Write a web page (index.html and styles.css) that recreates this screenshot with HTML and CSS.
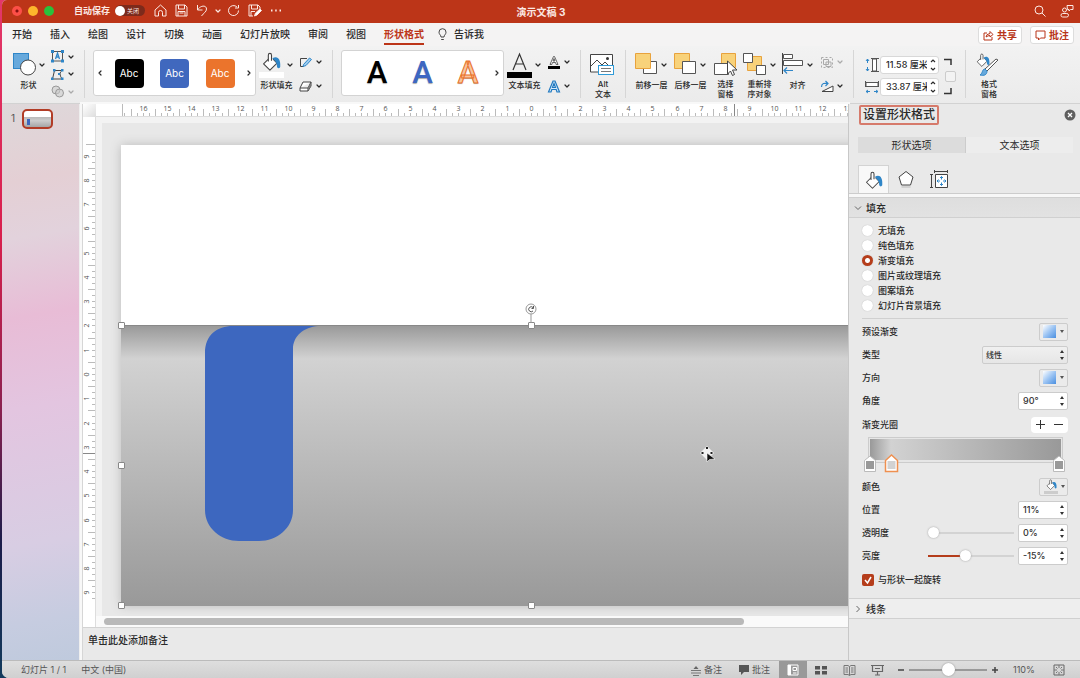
FILE: index.html
```html
<!DOCTYPE html>
<html lang="zh-CN">
<head>
<meta charset="utf-8">
<title>演示文稿 3</title>
<link rel="stylesheet" href="styles.css">
</head>
<body>
<svg class="defs" aria-hidden="true">
  <defs>
    <symbol id="chev" viewBox="0 0 6 6"><path d="M1 2l2 2 2-2" fill="none" stroke="currentColor" stroke-width="1.2" stroke-linecap="round" stroke-linejoin="round"/></symbol>
    <symbol id="updown" viewBox="0 0 6 14"><path d="M1 5l2-3 2 3zM1 9l2 3 2-3z" fill="currentColor"/></symbol>
    <symbol id="steps" viewBox="0 0 8 16"><path d="M2 5l2-2 2 2M2 11l2 2 2-2" fill="none" stroke="currentColor" stroke-width="1.2"/></symbol>
    <symbol id="bucket" viewBox="0 0 24 24">
      <path d="M10 7L2 15l8 8 9-9-5-5" fill="#fff" stroke="#444" stroke-width="1.4" stroke-linejoin="round"/>
      <path d="M8 12V4c0-3 4-3 4 0v7" fill="#fff" stroke="#444" stroke-width="1.4"/>
      <path d="M13 8c6-4 11 0 10 11-1 2-3 2-4 0 0-4-1-7-6-11z" fill="#2f86c8"/>
    </symbol>
    <linearGradient id="barGrad"><stop offset="0" stop-color="#999"/><stop offset=".11" stop-color="#d2d2d2"/><stop offset="1" stop-color="#999"/></linearGradient>
  </defs>
</svg>

<div class="window">
  <header class="titlebar">
    <div class="lights"><button class="light red" aria-label="关闭窗口"></button><button class="light yellow" aria-label="最小化"></button><button class="light green" aria-label="缩放"></button></div>
    <span class="autosave" id="autosave">自动保存</span>
    <button class="toggle" role="switch" aria-checked="false" aria-labelledby="autosave"><i></i><span>关闭</span></button>
    <nav class="quick">
      <button aria-label="主页"><svg width="13" height="13" viewBox="0 0 13 13"><path d="M1 6l5.500-5L12 6v6H8.500V8.500q0-2-2-2t-2 2V12H1z"/></svg></button>
      <button aria-label="保存"><svg width="13" height="13" viewBox="0 0 13 13"><path d="M1 1h9l2 2v9H1zM3.500 1v4h6V1M3 12V7.500h7V12M4.500 9h4"/></svg></button>
      <button aria-label="撤消"><svg width="13" height="13" viewBox="0 0 13 13"><path d="M1.500 1v5h5M1.500 6c3-5 9-5 9-1 0 3-3 4-5 7"/></svg></button>
      <button class="tiny" aria-label="撤消选项"><svg width="6" height="6"><use href="#chev"/></svg></button>
      <button aria-label="重做"><svg width="13" height="13" viewBox="0 0 13 13"><path d="M10 3A5 5 0 1 0 11.500 6.500M11.500 1v3H8"/></svg></button>
      <button aria-label="另存为"><svg width="14" height="13" viewBox="0 0 14 13"><path d="M5 12H1V1h9l2 2v2M3.500 1v4h6V1M3 12V7.500h4"/><path d="M6.500 12l1-3 4.500-4 1.500 1.500L9 11z" fill="#fff"/></svg></button>
      <button aria-label="更多"><svg width="12" height="13" viewBox="0 0 12 13"><path d="M1 6.500h1.500M5.200 6.500h1.500M9.500 6.500H11" stroke-width="1.800"/></svg></button>
    </nav>
    <h1 class="doc">演示文稿 3</h1>
    <div class="title-right">
      <button aria-label="搜索"><svg width="12" height="12" viewBox="0 0 12 12"><circle cx="5" cy="5" r="4"/><path d="M8 8l3.500 3.500"/></svg></button>
      <button aria-label="协作"><svg width="14" height="14" viewBox="0 0 14 14"><circle cx="4.500" cy="6" r="2"/><rect x="1" y="9.500" width="7.500" height="3.500" rx="1.700"/><path d="M7 1.500h6v4h-2.500L9 7V5.500H7.500z"/></svg></button>
    </div>
  </header>

  <div class="tabs">
    <nav class="tablist">
      <button>开始</button><button>插入</button><button>绘图</button><button>设计</button><button>切换</button><button>动画</button><button>幻灯片放映</button><button>审阅</button><button>视图</button><button class="on">形状格式</button>
      <button class="tell"><svg width="9" height="13" viewBox="0 0 9 13"><path d="M3 9C3 7 1 6.500 1 4.200a3.500 3.500 0 0 1 7 0C8 6.500 6 7 6 9zM3.200 11.500h2.600" fill="none" stroke="#444"/></svg>告诉我</button>
    </nav>
    <div class="share">
      <button><svg width="11" height="11" viewBox="0 0 11 11"><path d="M4 3H1v7h8V7M3 7q0-3 4-3.500V1.500L10 4.500 7 7V5.500Q5 5.500 3 7z"/></svg>共享</button>
      <button><svg width="11" height="11" viewBox="0 0 11 11"><path d="M1 1h9v7H5.500l-2 2V8H1z"/></svg>批注</button>
    </div>
  </div>

  <div class="ribbon">
    <button class="big shapes"><span class="pic"><svg width="24" height="24" viewBox="0 0 24 24"><rect x=".5" y="1.500" width="15" height="15" fill="#67a9dc" stroke="#2f86c8"/><circle cx="15" cy="15.500" r="7.500" fill="#fff" stroke="#444"/></svg><svg class="c" width="6" height="6"><use href="#chev"/></svg></span>形状</button>
    <div class="small three">
      <button aria-label="文本框"><svg width="14" height="13" viewBox="0 0 14 13"><rect x="1.500" y="1.500" width="10" height="9.500" fill="none" stroke="#555"/><path d="M0 0h3v3H0zM10 0h3v3h-3zM0 9.500h3v3H0zM10 9.500h3v3h-3z" fill="#2f86c8"/><path d="M4.500 9l2-6 2 6M5.200 7h2.600" fill="none" stroke="#2f86c8" stroke-width="1.300"/></svg><svg class="c" width="6" height="6"><use href="#chev"/></svg></button>
      <button aria-label="编辑形状"><svg width="14" height="13" viewBox="0 0 14 13"><path d="M3.500 2.500h7.500Q7 5 11 11H1.500z" fill="none" stroke="#444"/><path d="M2 1h2.500v2.500H2zM10 1h2.500v2.500H10zM0 9.500h2.500V12H0zM10 9.500h2.500V12H10zM7 5h2v2H7z" fill="#2f86c8"/></svg><svg class="c" width="6" height="6"><use href="#chev"/></svg></button>
      <button class="off" aria-label="合并形状"><svg width="14" height="13" viewBox="0 0 14 13"><g fill="#ccc" fill-opacity=".6" stroke="#999"><circle cx="5" cy="5" r="4"/><circle cx="8.500" cy="8" r="4"/></g></svg><svg class="c" width="6" height="6"><use href="#chev"/></svg></button>
    </div>
    <i class="sep"></i>
    <div class="gallery">
      <button class="arrow prev" aria-label="上一个"><svg width="6" height="6"><use href="#chev"/></svg></button>
      <button class="chip black">Abc</button><button class="chip blue">Abc</button><button class="chip orange">Abc</button>
      <button class="arrow next" aria-label="下一个"><svg width="6" height="6"><use href="#chev"/></svg></button>
    </div>
    <button class="big fill"><span class="pic"><svg width="25" height="26" viewBox="0 0 25 26"><use href="#bucket" x="2" width="21" height="19"/><path d="M0 20h25v6H0z" fill="#fff"/></svg><svg class="c" width="6" height="6"><use href="#chev"/></svg></span>形状填充</button>
    <div class="small">
      <button aria-label="形状轮廓"><svg width="14" height="13" viewBox="0 0 14 13"><path d="M8 2.500H1.500v8H5" fill="none" stroke="#444"/><path d="M4.500 8.500l6-6.500 2 1.500L7 9.500l-3 1z" fill="#9ccbee" stroke="#2f86c8"/></svg><svg class="c" width="6" height="6"><use href="#chev"/></svg></button>
      <button aria-label="形状效果"><svg width="14" height="13" viewBox="0 0 14 13"><path d="M4 2h8L9 8H1zM1 8v3h8l3-5V2M9 8v3" fill="#fff" stroke="#444" stroke-linejoin="round"/><path d="M9 8l3-5v3l-3 5z" fill="#777"/></svg><svg class="c" width="6" height="6"><use href="#chev"/></svg></button>
    </div>
    <i class="sep"></i>
    <div class="gallery">
      <span class="arrow"></span>
      <button class="art a1">A</button><button class="art a2">A</button><button class="art a3">A</button>
      <button class="arrow next" aria-label="下一个"><svg width="6" height="6"><use href="#chev"/></svg></button>
    </div>
    <button class="big fill"><span class="pic"><svg width="25" height="26" viewBox="0 0 25 26"><path d="M6 18l6.500-16L19 18M8.500 12h8" fill="none" stroke="#333" stroke-width="1.200"/><path d="M0 20h25v6H0z"/></svg><svg class="c" width="6" height="6"><use href="#chev"/></svg></span>文本填充</button>
    <div class="small">
      <button aria-label="文本轮廓"><svg width="14" height="13" viewBox="0 0 14 13"><path d="M3 8.500L6.500.5h1L11 8.500H9.200L8.500 6.500h-3l-.7 2zM6 5h2L7 2.500z" fill="#fff" stroke="#444" stroke-width=".8"/><path d="M1 10h12v3H1z"/></svg><svg class="c" width="6" height="6"><use href="#chev"/></svg></button>
      <button aria-label="文本效果"><svg width="14" height="13" viewBox="0 0 14 13"><path d="M1.500 12L6 1h2l4.500 11H10L9.200 9.500H4.800L4 12zM5.500 7.500h3L7 3.500z" fill="#d6eafa" stroke="#2079c0" stroke-width="1.200"/></svg><svg class="c" width="6" height="6"><use href="#chev"/></svg></button>
    </div>
    <i class="sep"></i>
    <button class="big alt"><span class="pic"><svg width="26" height="24" viewBox="0 0 26 24"><path d="M9 20H1.500V2.500h22V13" fill="#fff" stroke="#444"/><path d="M2 14l6-6 5 5 3-3 4 4" fill="none" stroke="#444"/><circle cx="18.500" cy="6.500" r="1.500" fill="#333"/><rect x="9.500" y="13.500" width="15" height="9" fill="#fff" stroke="#2f9bd8"/><path d="M12 16.500h10M12 19.500h10" stroke="#777"/></svg></span>Alt<br>文本</button>
    <i class="sep"></i>
    <div class="arrange">
      <button class="big"><span class="pic"><svg width="24" height="24" viewBox="0 0 24 24"><path d="M9.500 9.500h13v12h-13z" fill="#fff" stroke="#555"/><path d="M1.500 1.500h15v15h-15z" fill="#f8d27a" stroke="#e8a23c"/></svg><svg class="c" width="6" height="6"><use href="#chev"/></svg></span>前移一层</button>
      <button class="big"><span class="pic"><svg width="24" height="24" viewBox="0 0 24 24"><path d="M1.500 1.500h15v15h-15z" fill="#f8d27a" stroke="#e8a23c"/><path d="M9.500 9.500h13v12h-13z" fill="#fff" stroke="#555"/></svg><svg class="c" width="6" height="6"><use href="#chev"/></svg></span>后移一层</button>
      <button class="big pick"><span class="pic"><svg width="26" height="26" viewBox="0 0 26 26"><path d="M9.500 1.500h14v14h-14z" fill="#f8d27a" stroke="#e8a23c"/><path d="M2.500 11.500h14v11h-14z" fill="#fff" stroke="#555"/><path d="M15.500 9v13l3-3 2 4.500 2-1-2-4.500H25z" fill="#fff" stroke="#444"/></svg></span>选择<br>窗格</button>
      <button class="big order"><span class="pic"><svg width="24" height="24" viewBox="0 0 24 24"><path d="M4.500 4.500h14v14h-14z" fill="#f8d27a" stroke="#e8a23c"/><path d="M.5 1.500h9v9h-9zM13.500 13.500h9v9h-9z" fill="#fff" stroke="#555"/></svg><svg class="c" width="6" height="6"><use href="#chev"/></svg></span>重新排<br>序对象</button>
      <button class="big"><span class="pic"><svg width="24" height="24" viewBox="0 0 24 24"><path d="M2.500 1v21" stroke="#444"/><path d="M3.500 2.500h9v4h-9zM3.500 8.500h19v5h-19z" fill="#fff" stroke="#555"/><path d="M13 18.500H4M7 15.500l-3 3 3 3" fill="none" stroke="#2f86c8" stroke-width="1.200"/></svg><svg class="c" width="6" height="6"><use href="#chev"/></svg></span>对齐</button>
    </div>
    <div class="small">
      <button class="off" aria-label="组合"><svg width="14" height="13" viewBox="0 0 14 13"><g fill="none" stroke="#aaa"><path d="M3.500 3.500h5v5h-5zM6 6h5v4.500H6z"/><rect x="1.500" y="1.500" width="11" height="10" stroke-dasharray="2 2"/></g></svg><svg class="c" width="6" height="6"><use href="#chev"/></svg></button>
      <button aria-label="旋转"><svg width="14" height="13" viewBox="0 0 14 13"><path d="M2 11.500h11V6z" fill="#fff" stroke="#444"/><path d="M1.500 7c0-4 3-4 6-3.500M5.500 1L8 3.500 5.500 6" fill="none" stroke="#2f86c8" stroke-width="1.200"/></svg><svg class="c" width="6" height="6"><use href="#chev"/></svg></button>
    </div>
    <i class="sep"></i>
    <div class="sizes">
      <label class="size"><svg width="14" height="14" viewBox="0 0 14 14"><path d="M2.500 1v4M1 3l1.500-2L4 3M2.500 13V9M1 11l1.500 2L4 11" fill="none" stroke="#2f86c8"/><path d="M6 .5h8M6 13.500h8M7.500 1v12h4V1z" fill="#fff" stroke="#555"/></svg><span class="box"><input value="11.58 厘米" aria-label="高度"><svg width="8" height="16"><use href="#steps"/></svg></span></label>
      <label class="size"><svg width="14" height="14" viewBox="0 0 14 14"><path d="M.5 1v6M13.500 1v6M1 2.500h12v4H1z" fill="#fff" stroke="#555"/><path d="M1 11.500h4M3 10l-2 1.500L3 13M13 11.500H9M11 10l2 1.500L11 13" fill="none" stroke="#2f86c8"/></svg><span class="box"><input value="33.87 厘米" aria-label="宽度"><svg width="8" height="16"><use href="#steps"/></svg></span></label>
    </div>
    <div class="lock">
      <svg width="8" height="7" viewBox="0 0 8 7"><path d="M0 1.500h7V7" fill="none" stroke="#333" stroke-width="1.500"/></svg>
      <input type="checkbox" aria-label="锁定纵横比">
      <svg width="8" height="7" viewBox="0 0 8 7"><path d="M0 5.500h7V0" fill="none" stroke="#333" stroke-width="1.500"/></svg>
    </div>
    <i class="sep"></i>
    <button class="big format"><span class="pic"><svg width="26" height="26" viewBox="0 0 26 26"><use href="#bucket" x="1" y="1" width="16" height="14"/><path d="M24 8L13 19l-2-2L22 7z" fill="#fff" stroke="#555"/><path d="M11 17c-3 0-2 4-5 6 4 1 7 0 7-4z" fill="#67a9dc" stroke="#2f86c8"/></svg></span>格式<br>窗格</button>
  </div>

  <main class="work">
    <aside class="thumbs">
      <span>1</span>
      <button class="thumb" aria-label="幻灯片 1"><i></i></button>
    </aside>
    <section class="editor">
      <i class="corner"></i>
      <svg class="hruler" id="hruler"></svg>
      <svg class="vruler" id="vruler"></svg>
      <div class="canvas">
        <div class="slide">
          <svg class="art-layer" width="820" height="461" viewBox="0 0 820 461">
            <defs><linearGradient id="shapeGrad" x2="0" y2="1"><stop offset="0" stop-color="#989898"/><stop offset=".12" stop-color="#d2d2d2"/><stop offset="1" stop-color="#999"/></linearGradient></defs>
            <rect y="180" width="820" height="281" fill="url(#shapeGrad)"/>
            <path d="M0 180.500h820" stroke="#888"/>
            <path d="M84 208c0-18 12-27 28-27h85c-14 1-25 10-25 23v161c0 18-16 31-34 31h-20c-18 0-34-13-34-31z" fill="#3d67bf"/>
          </svg>
          <i class="handle tl"></i><i class="handle tc"></i><i class="handle ml"></i><i class="handle bl"></i><i class="handle bc"></i>
          <svg class="rotate" width="12" height="20" viewBox="0 0 12 20"><path d="M6 11v9" stroke="#999"/><circle cx="6" cy="6" r="5" fill="#fff" stroke="#999"/><path d="M8 4.500A2.500 2.500 0 1 0 8 8M8.500 3v2.500H6.500" fill="none" stroke="#555"/></svg>
          <svg class="pointer" width="16" height="18" viewBox="0 0 16 18"><path d="M7 0l7 7-7 7-7-7z" fill="#fff" fill-opacity=".8"/><path d="M6 2h2M1.500 7h2M10.500 7h2" stroke="#222" stroke-width="2"/><path d="M7 7v9l2.500-2.500L15 13z" fill="#111" stroke="#fff" stroke-width=".6"/></svg>
        </div>
      </div>
      <div class="scroll"><i></i></div>
      <div class="notes">单击此处添加备注</div>
    </section>

    <aside class="pane">
      <div class="pane-head"><h2>设置形状格式</h2><button aria-label="关闭窗格"><svg width="12" height="12" viewBox="0 0 12 12"><circle cx="6" cy="6" r="5.500" fill="#5f5f5f"/><path d="M4 4l4 4M8 4L4 8" stroke="#fff" stroke-width="1.300"/></svg></button></div>
      <div class="segments"><button class="on">形状选项</button><button>文本选项</button></div>
      <div class="icon-tabs">
        <button class="on" aria-label="填充与线条"><svg width="20" height="18"><use href="#bucket" width="20" height="18"/></svg></button>
        <button aria-label="效果"><svg width="18" height="18" viewBox="0 0 18 18"><path d="M9 1.500l7 5.500-2.500 8h-9L2 7z" fill="#fff" stroke="#444"/><path d="M4.500 17h9" stroke="#bbb"/></svg></button>
        <button aria-label="大小与属性"><svg width="20" height="20" viewBox="0 0 20 20"><path d="M6.500 5.500h12v13h-12z" fill="#fff" stroke="#444"/><path d="M5 2.500h14M5.500 1v3M18.500 1v3M2.500 5v14M1 5.500h3M1 18.500h3" stroke="#444"/><path d="M12.500 7.500v3M11 9l1.500-1.500L14 9M12.500 16.500v-3M11 15l1.500 1.500L14 15M8 12h3M9.500 10.500L8 12l1.500 1.500M17 12h-3M15.500 10.500L17 12l-1.500 1.500" fill="none" stroke="#2f86c8"/></svg></button>
      </div>
      <button class="section"><svg width="8" height="8" viewBox="0 0 8 8"><path d="M1 2.500l3 3 3-3" fill="none" stroke="#666"/></svg>填充</button>
      <div class="body">
        <fieldset class="radios">
          <label><input type="radio" name="fill">无填充</label>
          <label><input type="radio" name="fill">纯色填充</label>
          <label><input type="radio" name="fill" checked>渐变填充</label>
          <label><input type="radio" name="fill">图片或纹理填充</label>
          <label><input type="radio" name="fill">图案填充</label>
          <label><input type="radio" name="fill">幻灯片背景填充</label>
        </fieldset>
        <div class="row"><span>预设渐变</span><button class="swatch" aria-label="预设渐变"><i></i><b></b></button></div>
        <div class="row"><label for="type">类型</label><span class="picker"><select id="type"><option>线性</option></select><svg width="6" height="14"><use href="#updown"/></svg></span></div>
        <div class="row"><span>方向</span><button class="swatch" aria-label="方向"><i></i><b></b></button></div>
        <div class="row"><label for="angle">角度</label><span class="spin"><input id="angle" value="90°"><svg width="6" height="14"><use href="#updown"/></svg></span></div>
        <div class="row stops-row"><span>渐变光圈</span><span class="plusminus"><button aria-label="添加光圈"><svg width="9" height="9" viewBox="0 0 9 9"><path d="M0 4.500h9M4.500 0v9" stroke="#333"/></svg></button><button aria-label="删除光圈"><svg width="9" height="9" viewBox="0 0 9 9"><path d="M0 4.500h9" stroke="#333"/></svg></button></span></div>
        <svg class="stops" height="38" viewBox="0 0 205 38">
          <rect x="5.500" y=".5" width="194" height="25" fill="#e6e6e6" stroke="#ccc"/><rect x="7" y="2" width="191" height="21" fill="url(#barGrad)"/>
          <g fill="#fff" stroke="#bbb"><path d="M1.500 34.500v-11L7 19l5.500 4.500v11zM190.500 34.500v-11L196 19l5.500 4.500v11z"/><path d="M22.500 34.500v-11l6-5.500 6 5.500v11z" stroke="#ee9050" stroke-width="1.500"/></g>
          <path d="M3 24h8v8H3zM192 24h8v8h-8z" fill="#999"/><path d="M24.500 24h8v8h-8z" fill="#d2d2d2"/>
        </svg>
        <div class="row"><span>颜色</span><button class="swatch color" aria-label="颜色"><svg width="16" height="16" viewBox="0 0 16 16"><use href="#bucket" x="2" width="13" height="11"/><path d="M1 12h14v3H1z" fill="#ccc"/></svg><b></b></button></div>
        <div class="row"><label for="pos">位置</label><span class="spin"><input id="pos" value="11%"><svg width="6" height="14"><use href="#updown"/></svg></span></div>
        <div class="row"><label for="alpha">透明度</label><input class="range" type="range" min="0" max="100" value="0" aria-label="透明度滑块"><span class="spin"><input id="alpha" value="0%"><svg width="6" height="14"><use href="#updown"/></svg></span></div>
        <div class="row"><label for="bright">亮度</label><input class="range lum" type="range" min="-100" max="100" value="-15" aria-label="亮度滑块"><span class="spin"><input id="bright" value="-15%"><svg width="6" height="14"><use href="#updown"/></svg></span></div>
        <label class="check"><input type="checkbox" checked><svg width="12" height="12" viewBox="0 0 12 12"><path d="M3 6l2.500 3L9 3" fill="none" stroke="#fff" stroke-width="1.500"/></svg>与形状一起旋转</label>
      </div>
      <button class="section closed"><svg width="8" height="8" viewBox="0 0 8 8"><path d="M2.500 1l3 3-3 3" fill="none" stroke="#666"/></svg>线条</button>
    </aside>
  </main>

  <footer class="status">
    <span class="count">幻灯片 1 / 1</span><button class="lang">中文 (中国)</button>
    <div class="status-right">
      <button class="memo"><svg width="12" height="12" viewBox="0 0 12 12"><path d="M1 6.500h10M1 9h10M3 11.500h6" stroke="#777"/><path d="M3.500 5L6 2l2.500 3z" fill="#666"/></svg>备注</button>
      <button class="memo"><svg width="12" height="12" viewBox="0 0 12 12"><path d="M1 1h10v7H6l-3 3V8H1z" fill="#555"/></svg>批注</button>
      <div class="views">
        <button class="on" aria-label="普通"><svg width="12" height="12" viewBox="0 0 12 12"><path d="M1 1h10v10H1zM6 3.500h3.500v3H6zM6 9h3.500" fill="none" stroke="#fff"/><path d="M1 1h3v10H1z" fill="#fff"/></svg></button>
        <button aria-label="幻灯片浏览"><svg width="12" height="12" viewBox="0 0 12 12"><path d="M0 2h5v3.500H0zM7 2h5v3.500H7zM0 7h5v3.500H0zM7 7h5v3.500H7z" fill="#555"/></svg></button>
        <button aria-label="阅读视图"><svg width="13" height="12" viewBox="0 0 13 12"><path d="M6.500 2.500L5 1.500H1v9h4l1.500 1 1.500-1h4v-9H8zM6.500 2.500v9M2.500 4H5M2.500 6H5M2.500 8H5M8 4h2.500M8 6h2.500M8 8h2.500" fill="none" stroke="#777"/></svg></button>
        <button aria-label="幻灯片放映"><svg width="13" height="12" viewBox="0 0 13 12"><path d="M0 1.500h13M1.500 2v5.500h10V2M4 4.500h5M6.500 7.500v3M4 11h5" fill="none" stroke="#666" stroke-width="1.200"/></svg></button>
      </div>
      <div class="zoom">
        <button aria-label="缩小"><svg width="8" height="8" viewBox="0 0 8 8"><path d="M1 4h6" stroke="#444" stroke-width="1.500"/></svg></button>
        <input type="range" min="0" max="100" value="50" aria-label="缩放">
        <button aria-label="放大"><svg width="8" height="8" viewBox="0 0 8 8"><path d="M1 4h6M4 1v6" stroke="#444" stroke-width="1.500"/></svg></button>
      </div>
      <span class="pct">110%</span>
      <button class="fit" aria-label="适应窗口"><svg width="12" height="12" viewBox="0 0 12 12"><path d="M1 1h10v10H1z" fill="none" stroke="#666"/><path d="M6 1v3M6 11V8M1 6h3M11 6H8M3 3l1.500 1.500M9 3L7.500 4.500M3 9l1.500-1.500M9 9L7.500 7.500" stroke="#777"/></svg></button>
    </div>
  </footer>
</div>
<script src="rulers.js"></script>
</body>
</html>
```
FILE: styles.css
```css
* { box-sizing: border-box; }
body {
  margin: 0;
  height: 100vh;
  overflow: hidden;
  background: linear-gradient(#e3386a, #d81f4d 35%, #8c2050 60%, #1b1c4a 80%, #123a5c);
  font: 9px/12px Inter, "Noto Sans CJK SC", sans-serif;
  color: #2a2a2a;
}
button, input, select { font: inherit; color: inherit; margin: 0; padding: 0; border: 0; background: none; }
button { display: flex; align-items: center; justify-content: center; white-space: nowrap; }
h1, h2, fieldset { margin: 0; padding: 0; border: 0; font-size: inherit; }
svg { display: block; flex: none; }
.defs { position: absolute; width: 0; height: 0; }
.window { display: flex; flex-direction: column; height: 100%; margin-left: 2px; overflow: hidden; border-radius: 5px 0 0 7px; background: #eee; }

/* title bar */
.titlebar { position: relative; display: grid; grid-template-columns: auto auto auto auto 1fr auto; align-items: center; height: 23px; padding-bottom: 2px; background: #bc3518; color: #fbe9e4; }
.lights { display: flex; gap: 6px; margin: 0 20px 0 10px; }
.light { width: 10px; height: 10px; border-radius: 50%; }
.red { background: radial-gradient(circle, #8a1010 1px, #fc4f47 2px); }
.yellow { background: #fdb52c; }
.green { background: #2ac13c; }
.autosave { font-weight: 700; }
.toggle { width: 30px; height: 11px; margin-left: 5px; border-radius: 6px; background: #7c2a1b; justify-content: flex-start; gap: 2px; font-size: 6px; }
.toggle i { width: 10px; height: 10px; border-radius: 50%; background: #fff; }
.quick { display: flex; align-items: center; gap: 8px; margin-left: 9px; }
.quick .tiny { margin: 0 -2px; }
.quick svg, .title-right svg { fill: none; stroke: #fbe9e4; color: #fbe9e4; }
.doc { position: absolute; left: 0; right: 0; text-align: center; font-size: 10px; line-height: 20px; pointer-events: none; }
.title-right { grid-column: 6; display: flex; gap: 14px; padding-right: 6px; }

/* tabs */
.tabs { display: flex; justify-content: space-between; height: 23px; padding: 0 6px 0 10px; background: #f4f3f3; }
.tablist { display: flex; gap: 18px; font-size: 10px; font-weight: 500; }
.tablist button { height: 22px; border-bottom: 2px solid transparent; padding-top: 2px; }
.tablist .on { color: #bc3518; border-color: #bc3518; font-weight: 700; }
.tell { gap: 7px; margin-left: -4px; }
.share { display: flex; gap: 8px; padding-top: 3px; }
.share button { width: 44px; height: 18px; gap: 3px; border: 1px solid #ddd; border-radius: 3px; background: #fff; color: #b83518; font-size: 10px; font-weight: 700; }
.share svg { fill: none; stroke: #b83518; }

/* ribbon */
.ribbon { display: flex; flex: none; height: 58px; padding: 4px 9px; background: linear-gradient(#f2f2f2, #ebebeb); border-bottom: 1px solid #d2d2d2; font-size: 8px; line-height: 10px; font-weight: 500; }
.big { display: flex; flex-direction: column; justify-content: flex-start; align-items: center; width: 35px; font-weight: 500; }
.pic { display: flex; align-items: flex-start; align-self: flex-start; height: 30px; gap: 3px; padding-top: 2px; }
.pic .c { margin-top: 10px; }
.shapes .pic { padding-left: 2px; gap: 2px; }
.order { width: 33px; }
.alt { width: 28px; }
.pick { width: 27px; }
.format { width: 30px; }
.small { display: flex; flex-direction: column; justify-content: space-around; width: 25px; height: 48px; margin-left: 5px; }
.small button { gap: 3px; justify-content: flex-start; }
.small.three { justify-content: space-between; }
.off { color: #aaa; }
.sep { width: 1px; height: 48px; margin: 0 8px; background: #d6d6d6; }
.gallery { display: flex; align-items: center; justify-content: space-between; width: 163px; height: 46px; margin-right: 3px; padding: 0 3px; border: 1px solid #d3d3d3; border-radius: 3px; background: #fff; }
.arrow { width: 6px; height: 20px; }
.prev svg { transform: rotate(90deg); }
.next svg { transform: rotate(-90deg); }
.chip { width: 29px; height: 29px; margin: 0 5px; border-radius: 4px; color: #fff; font-size: 10px; font-weight: 400; }
.black { background: #000; }
.blue { background: #4068be; }
.orange { background: #eb742c; }
.art { width: 39px; height: 32px; font: 500 31px/32px Roboto, sans-serif; color: #000; text-shadow: 0 1px 1px #aaa; }
.a2 { color: #3d67c2; }
.a3 { color: #f8c6a0; -webkit-text-stroke: 1px #eb742c; }
.arrange { display: flex; gap: 4px; }
.sizes { display: flex; flex-direction: column; gap: 4px; padding: 6px 0 0 3px; }
.size { display: flex; align-items: center; gap: 1px; }
.box { display: flex; align-items: center; width: 59px; height: 18px; padding: 0 2px 0 5px; border: 1px solid #d8d8d8; border-radius: 3px; background: #fff; font-size: 9px; }
.box input { width: 41px; margin-right: 2px; overflow: hidden; }
.box svg { margin-left: auto; }
.lock { display: flex; flex-direction: column; gap: 6px; padding-top: 8px; margin-left: 5px; width: 13px; }
.lock input { appearance: none; width: 11px; height: 11px; margin-left: 1px; border: 1px solid #ccc; border-radius: 2px; background: #f3f3f3; }

/* work area */
.work { display: flex; flex: 1; min-height: 0; }
.thumbs { display: flex; align-items: flex-start; gap: 7px; width: 77px; padding: 5px 0 0 9px; background: linear-gradient(170deg, #ded8da, #e4cfd4 14%, #e2d2dc 24%, #e8bcd6 38%, #e3c5e0 54%, #d8cde3 78%, #c6cce0 92%, #bfcadd); color: #555; font-size: 10px; line-height: 18px; }
.thumb { width: 31px; height: 20px; border: 2px solid #b23c26; border-radius: 5px; background: linear-gradient(#fff 40%, #bbb 40%, #ccc 60%, #a5a5a5); justify-content: flex-start; align-items: flex-end; padding: 0 0 2px 3px; }
.thumb i { width: 3px; height: 6px; background: #3d67bf; }
.editor { display: grid; grid-template: 13px 1fr 11px 33px / 13px 1fr; flex: 1; min-width: 0; margin-left: 3px; border-left: 1px solid #d6d6d6; outline: 2px solid #f8f8f8; }
.corner { background: linear-gradient(135deg, #fff, #ddd); }
.hruler { width: 100%; height: 13px; background: #fff; }
.vruler { grid-row: 2 / 4; width: 13px; height: 100%; background: #fff; }
.hruler text, .vruler text { font: 7px "Open Sans", sans-serif; fill: #555; text-anchor: middle; }
.canvas { min-width: 0; min-height: 0; overflow: hidden; border: solid #f3f3f3; border-width: 6px 0 0 6px; background: #e8e8e8; padding: 22px 0 0 19px; }
.slide { position: relative; width: 820px; height: 461px; background: #fff; box-shadow: 0 0 10px #bbb; }
.handle { position: absolute; width: 7px; height: 7px; border: 1px solid #888; border-radius: 1px; background: #fff; }
.tl { left: -3px; top: 177px; }
.tc { left: 407px; top: 177px; }
.ml { left: -3px; top: 317px; }
.bl { left: -3px; top: 457px; }
.bc { left: 407px; top: 457px; }
.rotate { position: absolute; left: 404px; top: 158px; }
.pointer { position: absolute; left: 579px; top: 301px; }
.scroll { padding: 2px 0 0 8px; background: #fafafa; }
.scroll i { display: block; width: 86%; height: 7px; border-radius: 4px; background: #b9b9b9; }
.notes { grid-column: 1 / 3; padding: 6px 5px; border-top: 1px solid #d3d3d3; background: #e9e9e9; font: 500 10px/14px "Liberation Serif", "Noto Sans CJK SC", serif; }

/* format pane */
.pane { display: flex; flex-direction: column; flex: none; width: 232px; border-left: 1px solid #c8c8c8; background: #e9e9e9; z-index: 1; }
.pane-head { display: flex; justify-content: space-between; align-items: center; height: 21px; padding: 0 4px 0 10px; }
.pane-head h2 { border: 2px solid #d67a6b; border-radius: 2px; padding: 0 2px; font-size: 12px; line-height: 16px; font-weight: 500; }
.segments { display: flex; margin: 12px 7px 0 9px; border-radius: 3px; font-size: 10px; }
.segments button { flex: 1; height: 16px; background: #ededed; }
.segments .on { background: #dcdcdc; border-right: 1px solid #ccc; }
.icon-tabs { display: flex; gap: 1px; margin-top: 12px; padding-left: 9px; border-bottom: 1px solid #ccc; }
.icon-tabs button { width: 31px; height: 28px; }
.icon-tabs button + button { width: 32px; }
.icon-tabs .on { background: #f8f8f8; border: 1px solid #d3d3d3; border-bottom: 0; }
.section { flex: none; height: 21px; margin-top: 3px; padding-left: 5px; justify-content: flex-start; gap: 4px; border: solid #d0d0d0; border-width: 1px 0; background: linear-gradient(#dedede, #e2e2e2); font-size: 10px; font-weight: 500; box-shadow: 0 -3px #f7f7f7; }
.section.closed { margin-top: 6px; background: #eee; box-shadow: none; }
.body { display: flex; flex-direction: column; padding: 5px 12px 0 13px; font-weight: 500; }
.radios { display: flex; flex-direction: column; padding-bottom: 5px; margin-bottom: 1px; border-bottom: 1px solid #d0d0d0; }
.radios label { display: flex; align-items: center; gap: 5px; height: 15px; }
.radios input { appearance: none; width: 11px; height: 11px; border-radius: 50%; background: #fff; box-shadow: 0 0 1px #aaa; }
.radios input:checked { background: radial-gradient(circle, #fff 2px, #b53d1b 3px); }
.row { display: flex; align-items: center; justify-content: space-between; height: 23px; }
.row > :first-child { flex: 1; }
.stops-row { height: 25px; }
.swatch { width: 29px; height: 18px; gap: 4px; border: 1px solid #ccc; border-radius: 2px; background: #ebebeb; }
.swatch i { width: 13px; height: 13px; background: linear-gradient(135deg, #fff, #9cc4f3 50%, #4a8fe0); }
.swatch b { border: 2px solid transparent; border-top: 3px solid #555; border-bottom: 0; }
.swatch.color { gap: 2px; }
.picker, .spin { display: flex; align-items: center; height: 18px; border: 1px solid #ccc; border-radius: 2px; padding-right: 2px; color: #333; }
.picker { width: 86px; background: linear-gradient(#f0f0f0, #e6e6e6); }
.picker select { flex: 1; appearance: none; padding-left: 3px; font-size: 8px; }
.spin { width: 50px; background: #fff; }
.spin input { flex: 1; min-width: 0; padding-left: 4px; }
.plusminus { display: flex; width: 37px; height: 16px; border-radius: 4px; background: #fff; }
.plusminus button { flex: 1; }
.stops { width: 207px; }
.range { appearance: none; width: 86px; height: 12px; margin-right: 4px; background: linear-gradient(#d3d3d3, #d3d3d3) center / 100% 2px no-repeat; }
.range.lum { background: linear-gradient(90deg, #b53d1b 42%, #d3d3d3 42%) center / 100% 2px no-repeat; }
.range::-webkit-slider-thumb { appearance: none; width: 11px; height: 11px; border-radius: 50%; background: #fff; box-shadow: 0 0 2px #999; }
.check { display: flex; align-items: center; height: 25px; gap: 4px; }
.check input { appearance: none; width: 12px; height: 12px; border-radius: 2px; background: #b53d1b; }
.check svg { margin-left: -16px; }

/* status bar */
.status { display: flex; align-items: center; flex: none; height: 18px; border-top: 1px solid #bbb; background: linear-gradient(#dedede, #d0d0d0); color: #555; }
.count { margin: 0 15px 0 19px; }
.status-right { display: flex; align-items: center; height: 100%; margin-left: auto; }
.memo { gap: 2px; margin-right: 16px; }
.memo + .views { margin-left: -7px; }
.views { display: flex; height: 100%; }
.views button { width: 28px; }
.views .on { background: #999; }
.zoom { display: flex; align-items: center; gap: 4px; margin-left: 6px; }
.zoom input { appearance: none; width: 78px; height: 14px; background: linear-gradient(#999, #999) center / 100% 2px no-repeat; }
.zoom input::-webkit-slider-thumb { appearance: none; width: 13px; height: 13px; border-radius: 50%; background: #fff; box-shadow: 0 0 2px #888; }
.pct { width: 38px; padding-left: 14px; }
.fit { width: 43px; }
```
FILE: rulers.js
```js
const CM = 24.27;

function line(x1, y1, x2, y2, color = "#bbb") {
  return `<path d="M${x1} ${y1}L${x2} ${y2}" stroke="${color}"/>`;
}

function horizontal(center, half, width) {
  const edge = Math.round(center - half) + 0.5;
  let out = line(edge, 0, edge, 13);
  for (let q = -67; q <= 67; q++) {
    const x = Math.round(center + (q * CM) / 4) + 0.5;
    if (x > width) break;
    if (q % 4 === 0) out += `<text x="${x}" y="7">${Math.abs(q / 4)}</text>`;
    out += line(x, Math.abs(q % 4) === 2 ? 5 : 9, x, 12);
  }
  return out + line(638.5, 0, 638.5, 13, "#888") + line(0, 12.5, width, 12.5, "#ddd");
}

function vertical(center, half, height) {
  const edge = Math.round(center - half) + 0.5;
  let out = line(3, edge, 13, edge);
  for (let q = -37; q <= 37; q++) {
    const y = Math.round(center + (q * CM) / 4) + 0.5;
    if (q % 4 === 0) out += `<text transform="translate(6 ${y}) rotate(-90)">${Math.abs(q / 4)}</text>`;
    out += line(Math.abs(q % 4) === 2 ? 5 : 9, y, 12, y);
  }
  return out + line(0, 336.5, 13, 336.5, "#888") + line(12.5, 0, 12.5, height, "#ddd");
}

const h = document.getElementById("hruler");
const v = document.getElementById("vruler");
h.innerHTML = horizontal(435, 409, h.getBoundingClientRect().width);
v.innerHTML = vertical(257, 230, v.getBoundingClientRect().height);
```
